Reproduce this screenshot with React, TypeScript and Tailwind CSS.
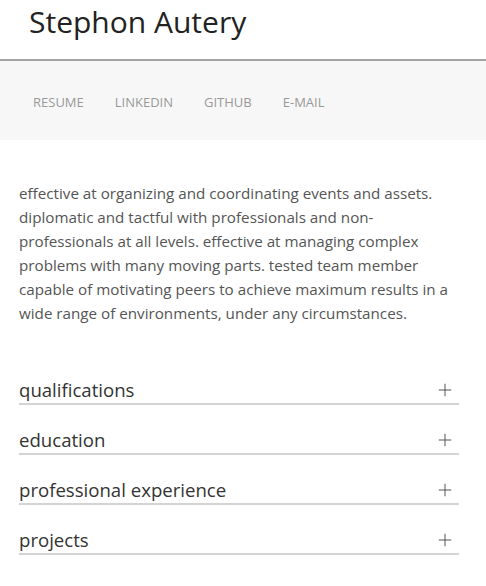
import { Plus } from "lucide-react";

const links = ["Resume", "LinkedIn", "GitHub", "E-mail"];
const sections = ["qualifications", "education", "professional experience", "projects"];

export default function App() {
  return (
    <div className="min-h-[586px] bg-white font-['Open_Sans',sans-serif]">
      <header className="h-[61px] border-b-2 border-[#a3a3a3] pl-[29px] pt-[2px]">
        <h1 className="text-[30px] font-normal leading-[40px] text-[#222]">Stephon Autery</h1>
      </header>
      <nav className="flex h-[79px] items-center gap-[31px] bg-[#f7f7f7] pl-[33px] pt-[4px]">
        {links.map((l) => (
          <a key={l} className="text-[13px] uppercase text-[#999]">
            {l}
          </a>
        ))}
      </nav>
      <main className="pl-[19px] pr-[27px] pt-[41px]">
        <p className="text-[15.2px] leading-[24px] text-[#555]">
          effective at organizing and coordinating events and assets. diplomatic and tactful with
          professionals and non-professionals at all levels. effective at managing complex problems
          with many moving parts. tested team member capable of motivating peers to achieve maximum
          results in a wide range of environments, under any circumstances.
        </p>
        <div className="mt-[52px] flex flex-col gap-[22px]">
          {sections.map((s) => (
            <div
              key={s}
              className="flex h-[28px] items-center justify-between border-b-2 border-[#d3d3d3]"
            >
              <span className="text-[18.6px] leading-[26px] text-[#333]">{s}</span>
              <Plus className="mr-[4px] h-5 w-5 text-[#444]" strokeWidth={1.1} />
            </div>
          ))}
        </div>
      </main>
    </div>
  );
}
